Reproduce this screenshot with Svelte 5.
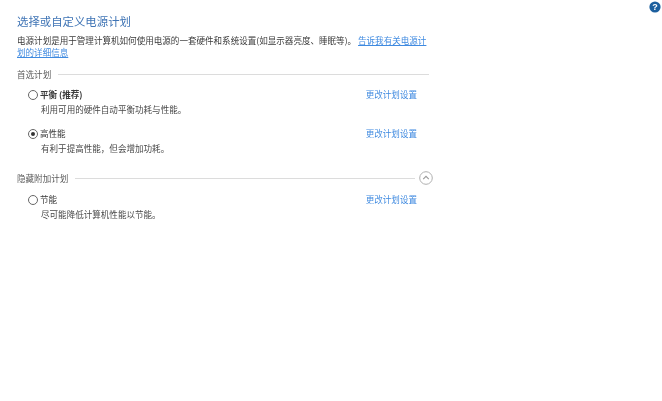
<script>
	const preferred = [
		{ name: '平衡 (推荐)', desc: '利用可用的硬件自动平衡功耗与性能。', bold: true, checked: false },
		{ name: '高性能', desc: '有利于提高性能，但会增加功耗。', bold: false, checked: true }
	];
	const hidden = [{ name: '节能', desc: '尽可能降低计算机性能以节能。', bold: false, checked: false }];
</script>

{#snippet plan(p)}
	<div class="plan">
		<div class="plan-head">
			<span class="radio" class:checked={p.checked}></span>
			<span class="plan-name" class:bold={p.bold}>{p.name}</span>
			<a class="link change" href="#top">更改计划设置</a>
		</div>
		<div class="plan-desc">{p.desc}</div>
	</div>
{/snippet}

<div class="page">
	<div class="help-row">
		<svg class="help" viewBox="0 0 12 12" width="12" height="12">
			<circle cx="6" cy="6" r="5.6" fill="#1c5f9e" />
			<text x="6" y="9.2" text-anchor="middle" class="help-q">?</text>
		</svg>
	</div>
	<main class="content">
		<h1>选择或自定义电源计划</h1>
		<p class="intro">
			电源计划是用于管理计算机如何使用电源的一套硬件和系统设置(如显示器亮度、睡眠等)。 <a class="link under" href="#top">告诉我有关电源计划的详细信息</a>
		</p>

		<div class="group-head first">
			<span>首选计划</span>
			<div class="rule"></div>
		</div>
		<div class="plans">
			{#each preferred as p}
				{@render plan(p)}
			{/each}
		</div>

		<div class="group-head second">
			<span>隐藏附加计划</span>
			<div class="rule"></div>
			<svg class="chevron" viewBox="0 0 14 14" width="14" height="14">
				<circle cx="7" cy="7" r="6.3" fill="#fff" stroke="#b0b0b0" />
				<path d="M4.2 8.2 7 5.4l2.8 2.8" fill="none" stroke="#999" stroke-width="1.1" />
			</svg>
		</div>
		<div class="plans hidden-plans">
			{#each hidden as p}
				{@render plan(p)}
			{/each}
		</div>
	</main>
</div>

<style>
	:global(body) {
		margin: 0;
		background: #fff;
	}

	.page {
		width: 662px;
		height: 401px;
		overflow: hidden;
		font-family: "Noto Sans CJK SC", "Liberation Sans", sans-serif;
		color: #444;
		font-size: 8.55px;
		filter: blur(0.35px);
	}

	.help-row {
		display: flex;
		justify-content: flex-end;
		padding: 1px 1px 0 0;
		height: 13px;
	}

	.help-q {
		fill: #fff;
		font: bold 9px "Liberation Sans", sans-serif;
	}

	.content {
		width: 412px;
		padding-left: 17px;
	}

	h1 {
		margin: 0;
		font-size: 11.4px;
		line-height: 15px;
		font-weight: 400;
		color: #3f74b5;
	}

	.intro {
		margin: 5px 0 0;
		line-height: 12px;
		color: #3a3a3a;
	}

	.link {
		color: #3f8ae0;
		text-decoration: none;
	}

	.under {
		text-decoration: underline;
	}

	.group-head {
		display: flex;
		align-items: center;
		gap: 7px;
		height: 12px;
		color: #5a5a5a;
	}

	.group-head.first {
		margin-top: 10px;
	}

	.group-head.second {
		margin-top: 18px;
		width: 416px;
	}

	.rule {
		flex: 1;
		height: 1px;
		background: #dcdcdc;
	}

	.chevron {
		margin-left: -3px;
		flex: none;
	}

	.plans {
		display: flex;
		flex-direction: column;
		gap: 12px;
		margin-top: 8px;
	}

	.hidden-plans {
		margin-top: 9px;
	}

	.plan {
		padding-left: 11px;
	}

	.plan-head {
		display: flex;
		align-items: center;
		height: 12px;
	}

	.radio {
		box-sizing: border-box;
		width: 10px;
		height: 10px;
		border: 1px solid #666;
		border-radius: 50%;
		margin-right: 2px;
		margin-top: 2px;
		position: relative;
		flex: none;
	}

	.radio.checked::after {
		content: "";
		position: absolute;
		inset: 2px;
		border-radius: 50%;
		background: #333;
	}

	.plan-name {
		color: #3a3a3a;
	}

	.plan-name.bold {
		font-weight: 700;
	}

	.change {
		margin-left: auto;
		position: relative;
		left: -12px;
	}

	.plan-desc {
		margin: 3px 0 0 13px;
		line-height: 12px;
		color: #484848;
	}
</style>
